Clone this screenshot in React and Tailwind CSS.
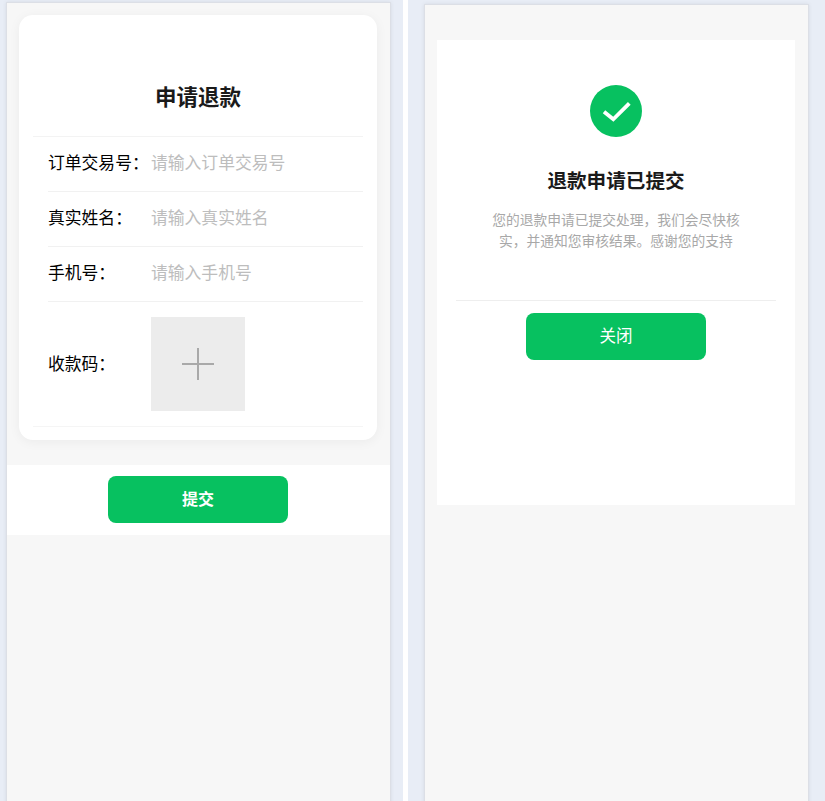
const FONT = 'font-["Liberation_Sans","Noto_Sans_CJK_SC",sans-serif]'

const FIELDS = [
  { label: '订单交易号\uFF1A', placeholder: '请输入订单交易号' },
  { label: '真实姓名\uFF1A', placeholder: '请输入真实姓名' },
  { label: '手机号\uFF1A', placeholder: '请输入手机号' },
]

function PhoneFrame({ className, children }) {
  return (
    <div className={`flex flex-col w-[385px] h-[900px] bg-[#f7f7f7] border border-[#dcdfe6] shadow-[0_0_4px_rgba(0,0,0,0.08)] ${className}`}>
      {children}
    </div>
  )
}

function FieldRow({ label, placeholder }) {
  return (
    <div className="flex items-center h-[55px] ml-[15px] border-b border-[#f1f1f1]">
      <span className="w-[103px] shrink-0 text-[16.8px] text-black whitespace-nowrap">{label}</span>
      <input
        className="min-w-0 flex-1 outline-none text-[16.8px] placeholder:text-[#bdbdbd]"
        placeholder={placeholder}
      />
    </div>
  )
}

function RefundForm() {
  return (
    <PhoneFrame className="mt-[2px] ml-[6px]">
      <div className="ml-[12px] mr-[13px] mt-[12px] h-[425px] rounded-[14px] bg-white px-[14px] shadow-[0_2px_12px_rgba(0,0,0,0.05)]">
        <h1 className="pt-[67px] h-[122px] text-center text-[21.5px] leading-[32px] font-bold text-[#1a1a1a] border-b border-[#f3f3f3]">
          申请退款
        </h1>
        {FIELDS.map((f) => (
          <FieldRow key={f.label} {...f} />
        ))}
        <div className="flex items-center h-[125px] pl-[15px] border-b border-[#f5f5f5]">
          <span className="w-[103px] shrink-0 mt-[2px] text-[16.8px] text-black">{'收款码\uFF1A'}</span>
          <div className="flex items-center justify-center w-[94px] h-[94px] bg-[#ececec]">
            <svg width="32" height="32" viewBox="0 0 32 32" fill="none" stroke="#a9a9a9" strokeWidth="2">
              <path d="M16 0v32M0 16h32" />
            </svg>
          </div>
        </div>
      </div>
      <div className="flex justify-center mt-[25px] pt-[11px] pr-[1px] h-[70px] bg-white">
        <button className="w-[180px] h-[47px] rounded-[8px] bg-[#07c160] text-white text-[16px] font-bold">提交</button>
      </div>
    </PhoneFrame>
  )
}

function RefundDone() {
  return (
    <PhoneFrame className="mt-[4px] ml-[16px]">
      <div className="flex flex-col items-center ml-[12px] mr-[13px] mt-[35px] h-[465px] bg-white">
        <div className="mt-[45px] w-[52px] h-[52px] rounded-full bg-[#07c160]">
          <svg width="52" height="52" viewBox="0 0 52 52" fill="none" stroke="white" strokeWidth="3.8">
            <path d="M14 26.7 L23.3 34.3 L39.3 18.3" />
          </svg>
        </div>
        <h2 className="mt-[29px] text-[19.6px] leading-[30px] font-bold text-[#1a1a1a]">退款申请已提交</h2>
        <p className="mt-[14px] w-[250px] text-center text-[13.75px] leading-[21px] text-[#a8a8a8]">
          {'您的退款申请已提交处理\uFF0C我们会尽快核实\uFF0C并通知您审核结果。感谢您的支持'}
        </p>
        <div className="mt-[48px] w-[320px] border-t border-[#eeeeee]" />
        <button className="mt-[12px] w-[180px] h-[47px] rounded-[8px] bg-[#07c160] text-white text-[16.5px]">关闭</button>
      </div>
    </PhoneFrame>
  )
}

export default function App() {
  return (
    <div className={`flex h-[801px] w-[825px] overflow-hidden bg-white ${FONT}`}>
      <div className="w-[403px] shrink-0 bg-[#e8edf6] overflow-hidden">
        <RefundForm />
      </div>
      <div className="ml-[5px] flex-1 bg-[#e8edf6] overflow-hidden">
        <RefundDone />
      </div>
    </div>
  )
}
